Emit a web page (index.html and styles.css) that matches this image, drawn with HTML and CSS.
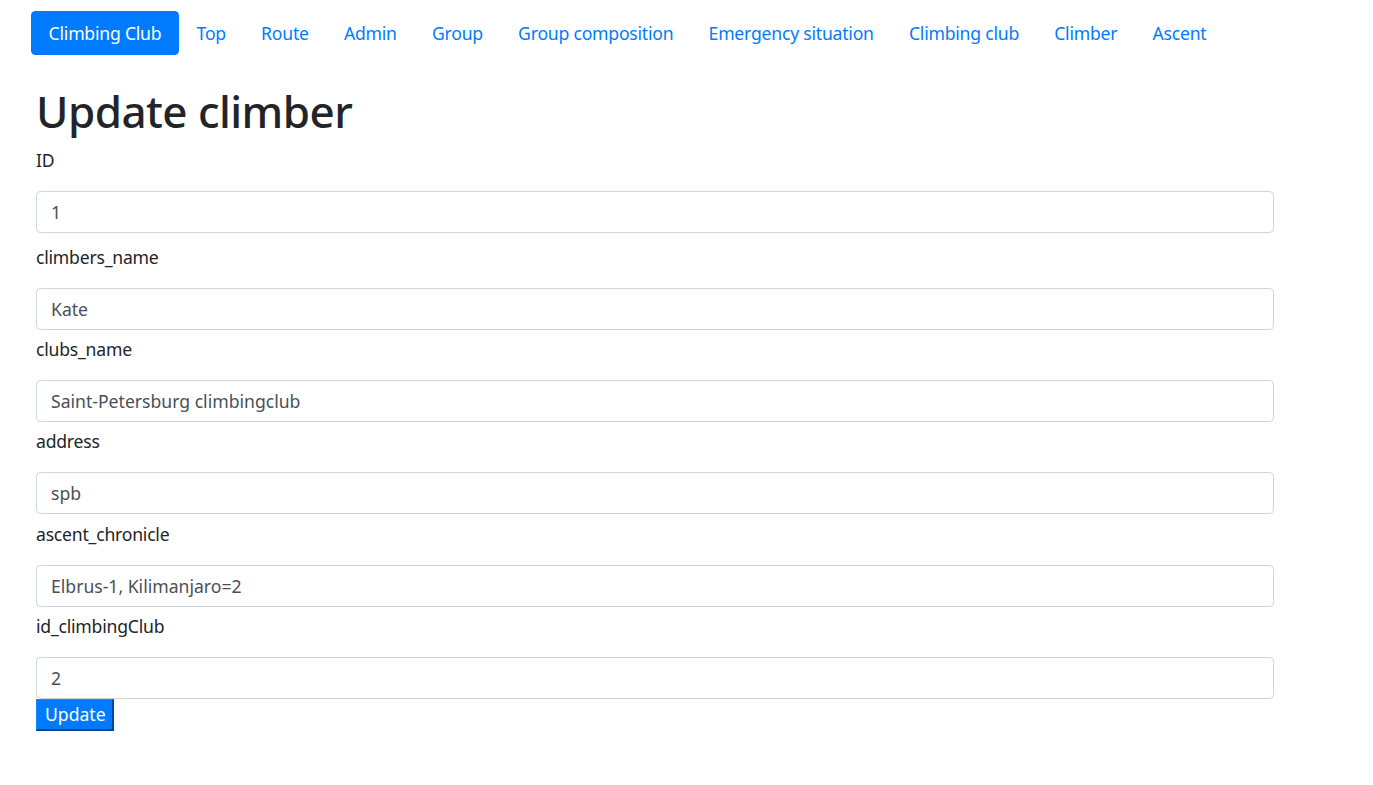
FILE: index.html
```html
<!DOCTYPE html>
<html lang="en">
<head>
<meta charset="utf-8">
<title>Update climber</title>
<link rel="stylesheet" href="styles.css">
</head>
<body>
<nav class="nav">
  <a class="nav-link active" href="#">Climbing Club</a>
  <a class="nav-link" href="#">Top</a>
  <a class="nav-link" href="#">Route</a>
  <a class="nav-link" href="#">Admin</a>
  <a class="nav-link" href="#">Group</a>
  <a class="nav-link" href="#">Group composition</a>
  <a class="nav-link" href="#">Emergency situation</a>
  <a class="nav-link" href="#">Climbing club</a>
  <a class="nav-link" href="#">Climber</a>
  <a class="nav-link" href="#">Ascent</a>
</nav>
<main class="content">
  <h1 class="title">Update climber</h1>
  <form class="form">
    <div class="field field-first">
      <label class="label">ID</label>
      <input class="input" type="text" value="1">
    </div>
    <div class="field">
      <label class="label">climbers_name</label>
      <input class="input" type="text" value="Kate">
    </div>
    <div class="field">
      <label class="label">clubs_name</label>
      <input class="input" type="text" value="Saint-Petersburg climbingclub">
    </div>
    <div class="field">
      <label class="label">address</label>
      <input class="input" type="text" value="spb">
    </div>
    <div class="field">
      <label class="label">ascent_chronicle</label>
      <input class="input" type="text" value="Elbrus-1, Kilimanjaro=2">
    </div>
    <div class="field field-last">
      <label class="label">id_climbingClub</label>
      <input class="input" type="text" value="2">
    </div>
    <button class="btn" type="submit">Update</button>
  </form>
</main>
</body>
</html>
```
FILE: styles.css
```css
* { box-sizing: border-box; }
html, body {
  margin: 0;
  padding: 0;
  background: #fff;
}
body {
  font-family: "Noto Sans", "Open Sans", "Liberation Sans", sans-serif;
  font-size: 17.6px;
  line-height: 26.4px;
  letter-spacing: -0.0125em;
  color: #212529;
}
.nav {
  display: flex;
  margin: 11px 0 0 31px;
}
.nav-link {
  display: block;
  padding: 8.8px 17.6px;
  line-height: 26.4px;
  color: #007bff;
  text-decoration: none;
  border-radius: 4.4px;
  white-space: nowrap;
}
.nav-link.active {
  background: #007bff;
  color: #fff;
}
.content {
  padding-left: 36px;
}
.title {
  margin: 30px 0 9px;
  font-size: 44px;
  line-height: 52.8px;
  font-weight: 500;
  letter-spacing: -0.0125em;
}
.form {
  display: flex;
  flex-direction: column;
  align-items: flex-start;
}
.field {
  display: flex;
  flex-direction: column;
  width: 1238px;
  margin-bottom: 6.3px;
}
.field-first { margin-bottom: 11px; }
.field-last { margin-bottom: 0; }
.label {
  display: block;
  margin-bottom: 17.6px;
}
.input {
  display: block;
  width: 100%;
  height: 42px;
  padding: 6.6px 14px;
  font: inherit;
  color: #495057;
  background: #fff;
  border: 1px solid #ced4da;
  border-radius: 4.4px;
}
.btn {
  font: inherit;
  line-height: 26px;
  height: 32px;
  padding: 1px 6px 1px 8px;
  color: #fff;
  background: #007bff;
  border-style: solid;
  border-width: 1px 2px 2px 1px;
  border-color: #1a88ff #004a99 #004a99 #1a88ff;
}
```
